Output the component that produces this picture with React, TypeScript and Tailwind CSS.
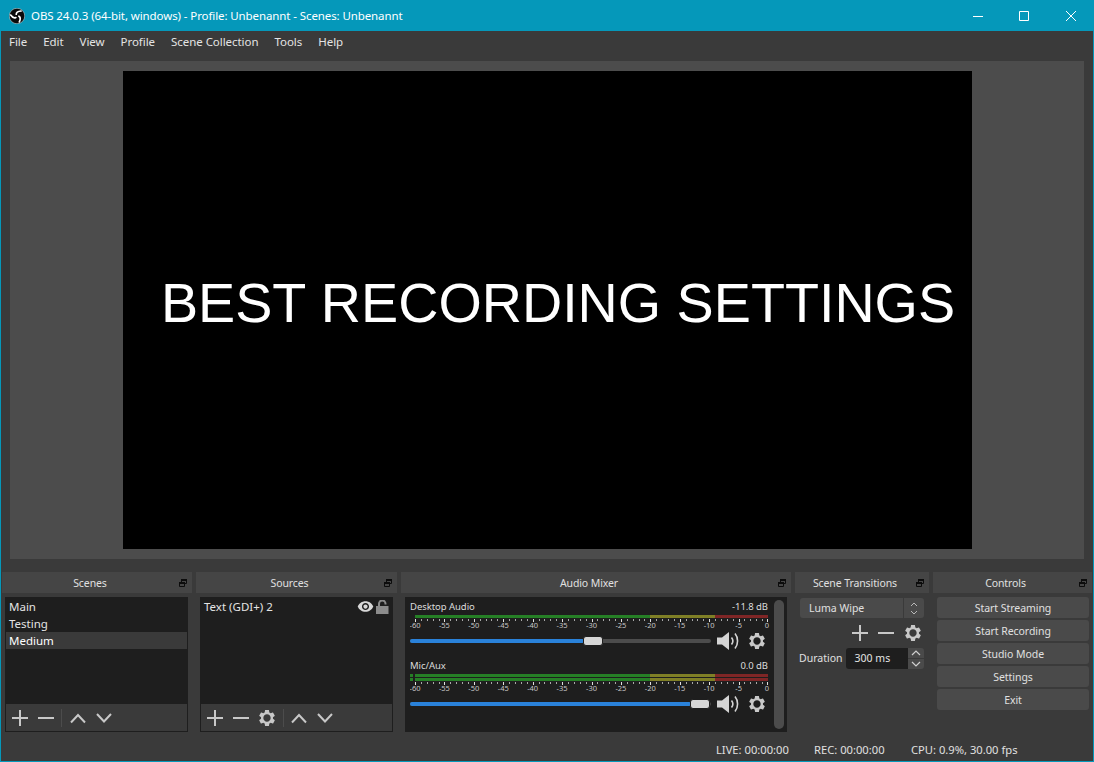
import React from 'react';

const GEAR =
  'M19.14 12.94c.04-.3.06-.61.06-.94 0-.32-.02-.64-.07-.94l2.03-1.58c.18-.14.23-.41.12-.61l-1.92-3.32c-.12-.22-.37-.29-.59-.22l-2.39.96c-.5-.38-1.03-.7-1.62-.94l-.36-2.54c-.04-.24-.24-.41-.48-.41h-3.84c-.24 0-.43.17-.47.41l-.36 2.54c-.59.24-1.13.57-1.62.94l-2.39-.96c-.22-.08-.47 0-.59.22L2.74 8.87c-.12.21-.08.47.12.61l2.03 1.58c-.05.3-.09.63-.09.94s.02.64.07.94l-2.03 1.58c-.18.14-.23.41-.12.61l1.92 3.32c.12.22.37.29.59.22l2.39-.96c.5.38 1.03.7 1.62.94l.36 2.54c.05.24.24.41.48.41h3.84c.24 0 .44-.17.47-.41l.36-2.54c.59-.24 1.13-.56 1.62-.94l2.39.96c.22.08.47 0 .59-.22l1.92-3.32c.12-.22.07-.47-.12-.61l-2.01-1.58zM12 16.4c-2.43 0-4.4-1.97-4.4-4.4s1.97-4.4 4.4-4.4 4.4 1.97 4.4 4.4-1.97 4.4-4.4 4.4z';

const Gear = () => (
  <svg width="20" height="20" viewBox="0 0 24 24" className="shrink-0 -m-px text-[#c8c8c8]">
    <path d={GEAR} fill="currentColor" fillRule="evenodd" />
  </svg>
);

const Plus = () => (
  <svg width="16" height="16" viewBox="0 0 16 16" className="shrink-0 text-[#c8c8c8]">
    <path d="M8 0v16M0 8h16" stroke="currentColor" strokeWidth="2" />
  </svg>
);

const Minus = () => (
  <svg width="16" height="16" viewBox="0 0 16 16" className="shrink-0 text-[#c8c8c8]">
    <path d="M0 8h16" stroke="currentColor" strokeWidth="2" />
  </svg>
);

const Up = () => (
  <svg width="16" height="16" viewBox="0 0 16 16" className="shrink-0 text-[#c8c8c8]">
    <path d="M1 12.5 8 5l7 7.5" fill="none" stroke="currentColor" strokeWidth="2" />
  </svg>
);

const Down = () => (
  <svg width="16" height="16" viewBox="0 0 16 16" className="shrink-0 text-[#c8c8c8]">
    <path d="M1 4 8 11.5 15 4" fill="none" stroke="currentColor" strokeWidth="2" />
  </svg>
);

const Float = () => (
  <svg width="8" height="8" viewBox="0 0 8 8" className="shrink-0">
    <path d="M2.5.5h5v4h-5z" fill="none" stroke="#0c0c0c" />
    <path d="M.5 3.5h5v4h-5z" fill="#454545" stroke="#0c0c0c" />
    <path d="M2 1h6M0 4h6" stroke="#0c0c0c" strokeWidth="2" />
  </svg>
);

const Speaker = () => (
  <svg width="23" height="18" viewBox="0 0 23 18" className="shrink-0 text-[#d4d4d4]">
    <path d="M0 5.5h5L12 0v18l-7-5.5H0z" fill="currentColor" />
    <path d="M14.5 5.5c1.6 2 1.6 5 0 7" fill="none" stroke="currentColor" strokeWidth="1.6" />
    <path d="M18 1.5c3.4 4 3.4 11 0 15" fill="none" stroke="currentColor" strokeWidth="1.6" />
  </svg>
);

const Logo = () => (
  <svg width="16" height="16" viewBox="0 0 32 32" className="shrink-0">
    <circle cx="16" cy="16" r="15.5" fill="#0a0a0a" stroke="#e8e8e8" strokeWidth="1" />
    {[0, 120, 240].map((a) => (
      <path
        key={a}
        transform={`rotate(${a} 16 16)`}
        d="M14.5 12.5C14.5 9 18 6.5 24 6"
        fill="none"
        stroke="#fff"
        strokeWidth="3.4"
        strokeLinecap="round"
      />
    ))}
  </svg>
);

const DB_MAJOR = [-60, -55, -50, -45, -40, -35, -30, -25, -20, -15, -10, -5, 0];

// channel meter, x=0 in the svg is the left edge of the peak squares
const Meter = ({ bars, peak }: { bars: number; peak?: boolean }) => {
  const rowH = 4;
  const barsH = bars * rowH - 1;
  const x0 = 5;
  const step = 353 / 60;
  const ticks = [];
  for (let i = 0; i <= 60; i++) ticks.push(i);
  return (
    <svg width="364" height={barsH + 12} viewBox={`0 0 364 ${barsH + 12}`} className="block shrink-0">
      {Array.from({ length: bars }).map((_, r) => (
        <g key={r}>
          {peak && <rect x="0" y={r * rowH} width="3" height="3" fill="#267f26" />}
          <rect x={x0} y={r * rowH} width={235} height="3" fill="#267f26" />
          <rect x={x0 + 235} y={r * rowH} width={65} height="3" fill="#7f7f26" />
          <rect x={x0 + 300} y={r * rowH} width={53} height="3" fill="#7f2626" />
        </g>
      ))}
      {ticks.map((i) => (
        <rect
          key={i}
          x={Math.round(x0 + i * step) - (i === 60 ? 1 : 0)}
          y={barsH + 1}
          width="1"
          height={i % 5 === 0 ? 3 : 2}
          fill={i % 5 === 0 ? '#e0e0e0' : '#a8a8a8'}
        />
      ))}
      {DB_MAJOR.map((d) => (
        <text
          key={d}
          x={x0 + (d + 60) * step - (d === 0 ? 1 : 0)}
          y={barsH + 10}
          textAnchor="middle"
          fontSize="7.5"
          fill="#c4c4c4"
          fontFamily="Noto Sans, sans-serif"
        >
          {d}
        </text>
      ))}
    </svg>
  );
};

const Channel = ({
  name,
  db,
  bars,
  peak,
  fill,
}: {
  name: string;
  db: string;
  bars: number;
  peak?: boolean;
  fill: number;
}) => (
  <div className="flex flex-col">
    <div className="flex justify-between items-center h-[14px] pt-[1px] w-[358px] text-[9.5px] tracking-[-0.05px] text-[#dcdcdc]">
      <span>{name}</span>
      <span>{db}</span>
    </div>
    <div className="mt-[1px]">
      <Meter bars={bars} peak={peak} />
    </div>
    <div className="flex items-center h-[18px] mt-[2px]">
      <div className="relative w-[301px] h-[4px] rounded-full bg-[#4c4c4c]">
        <div className="h-full rounded-full bg-[#2a82da]" style={{ width: fill }} />
        <div
          className="absolute top-[-3px] h-[10px] rounded-[3px] bg-[#d6d6d6] border border-[#1e1e1e]"
          style={{ left: fill - 1, width: 301 - fill < 20 ? 21 : 20 }}
        />
      </div>
      <div className="ml-[6px]">
        <Speaker />
      </div>
      <div className="ml-[8px]">
        <Gear />
      </div>
    </div>
  </div>
);

const Dock = ({ title, className, children }: { title: string; className: string; children: React.ReactNode }) => (
  <div className={`flex flex-col shrink-0 ${className}`}>
    <div className="relative flex items-center justify-center h-[21px] pt-[3px] pr-[14px] bg-[#454545] text-[10.5px] tracking-[-0.1px] text-[#e0e0e0]">
      {title}
      <div className="absolute right-[5px] top-[7px]">
        <Float />
      </div>
    </div>
    <div className="flex-1 min-h-0 pt-[4px]">{children}</div>
  </div>
);

const ListBox = ({ children, tools }: { children: React.ReactNode; tools: React.ReactNode }) => (
  <div className="flex flex-col h-[135px] mx-[4px] bg-[#1e1e1e] border border-[#1e1e1e]">
    <div className="flex-1 min-h-0 text-[11.5px] text-[#e4e4e4]">{children}</div>
    <div className="flex items-center h-[27px] bg-[#3a3a3a] px-[6px]">{tools}</div>
  </div>
);

const Sep = () => <div className="w-px h-[18px] bg-[#4c4c4c]" />;

const CtrlButton = ({ label }: { label: string }) => (
  <button className="h-[21px] rounded-[3px] bg-[#4a4a4a] text-[10.5px] tracking-[-0.05px] text-[#e0e0e0] leading-none pt-[1px]">{label}</button>
);

export default function App() {
  return (
    <div className="w-[1094px] h-[762px] flex flex-col overflow-hidden bg-[#3a3a3a] text-[#e0e0e0] border-x border-b border-[#0598ba] font-['Noto_Sans',sans-serif]">
      {/* title bar */}
      <div className="flex items-center h-[31px] shrink-0 bg-[#0598ba] -mx-px pl-[9px] text-[11.5px] tracking-[-0.1px] text-white">
        <Logo />
        <span className="ml-[6px]">OBS 24.0.3 (64-bit, windows) - Profile: Unbenannt - Scenes: Unbenannt</span>
        <div className="ml-auto flex items-center">
          <div className="w-[46px] flex justify-center">
            <svg width="10" height="10" viewBox="0 0 10 10"><path d="M0 5.5h10" stroke="#fff" /></svg>
          </div>
          <div className="w-[46px] mr-[1px] flex justify-center">
            <svg width="10" height="10" viewBox="0 0 10 10"><path d="M.5.5h9v9h-9z" fill="none" stroke="#fff" /></svg>
          </div>
          <div className="w-[46px] flex justify-center">
            <svg width="10" height="10" viewBox="0 0 10 10"><path d="M0 0l10 10M10 0 0 10" stroke="#fff" /></svg>
          </div>
        </div>
      </div>

      {/* menu */}
      <div className="flex items-center h-[23px] shrink-0 pl-[8px] pb-[1px] gap-[16px] text-[11.5px] tracking-[-0.05px] text-[#e4e4e4]">
        {['File', 'Edit', 'View', 'Profile', 'Scene Collection', 'Tools', 'Help'].map((m) => (
          <span key={m}>{m}</span>
        ))}
      </div>

      {/* preview */}
      <div className="flex justify-center items-center h-[498px] shrink-0 mx-[9px] mt-[7px] bg-[#4c4c4c]">
        <div className="flex items-center justify-center w-[849px] h-[478px] bg-black pl-[22px] pb-[12px] whitespace-nowrap text-[55.7px] text-white font-['Liberation_Sans',sans-serif]">
          BEST RECORDING SETTINGS
        </div>
      </div>

      {/* docks */}
      <div className="flex h-[160px] shrink-0 mt-[13px] ml-[1px] gap-[4px]">
        <Dock title="Scenes" className="w-[190px]">
          <div className="ml-[-1px]">
            <ListBox
              tools={
                <div className="flex items-center">
                  <Plus />
                  <div className="ml-[10px]"><Minus /></div>
                  <div className="ml-[7px]"><Sep /></div>
                  <div className="ml-[8px]"><Up /></div>
                  <div className="ml-[10px]"><Down /></div>
                </div>
              }
            >
              <div className="pl-[3px] h-[17px] flex items-center">Main</div>
              <div className="pl-[3px] h-[17px] flex items-center">Testing</div>
              <div className="pl-[3px] h-[17px] flex items-center bg-[#3a3a3a] text-white">Medium</div>
            </ListBox>
          </div>
        </Dock>

        <Dock title="Sources" className="w-[201px]">
          <ListBox
            tools={
              <div className="flex items-center">
                <Plus />
                <div className="ml-[10px]"><Minus /></div>
                <div className="ml-[9px]"><Gear /></div>
                <div className="ml-[7px]"><Sep /></div>
                <div className="ml-[7px]"><Up /></div>
                <div className="ml-[10px]"><Down /></div>
              </div>
            }
          >
            <div className="flex items-center h-[17px] pl-[3px] pr-[3px]">
              <span>Text (GDI+) 2</span>
              <svg width="17" height="17" viewBox="0 0 24 24" className="ml-auto text-[#d8d8d8]">
                <path
                  fill="currentColor"
                  d="M12 4.5C7 4.5 2.73 7.61 1 12c1.73 4.39 6 7.5 11 7.5s9.27-3.11 11-7.5c-1.73-4.39-6-7.5-11-7.5zM12 17c-2.76 0-5-2.24-5-5s2.24-5 5-5 5 2.24 5 5-2.24 5-5 5zm0-8c-1.66 0-3 1.34-3 3s1.34 3 3 3 3-1.34 3-3-1.34-3-3-3z"
                />
              </svg>
              <svg width="13" height="14" viewBox="0 0 13 14" className="ml-[2px] text-[#8c8c8c]">
                <path d="M0 6h12.5v8H0z" fill="currentColor" />
                <path d="M3 6V3.7a3.2 3.2 0 0 1 6.5 0V4.5" fill="none" stroke="currentColor" strokeWidth="2" />
              </svg>
            </div>
          </ListBox>
        </Dock>

        <Dock title="Audio Mixer" className="w-[390px]">
          <div className="flex h-[135px] mx-[4px] bg-[#1e1e1e] pl-[5px] pt-[3px]">
            <div className="flex flex-col gap-[9px] w-[364px]">
              <Channel name="Desktop Audio" db="-11.8 dB" bars={1} fill={174} />
              <Channel name="Mic/Aux" db="0.0 dB" bars={2} peak fill={281} />
            </div>
            <div className="w-[10px] h-[129px] rounded-full bg-[#4c4c4c]" />
          </div>
        </Dock>

        <Dock title="Scene Transitions" className="w-[134px]">
          <div className="flex flex-col px-[5px] pt-[1px]">
            <div className="flex items-stretch h-[20px] rounded-[3px] bg-[#4a4a4a] text-[10.5px] text-[#e0e0e0]">
              <div className="flex-1 flex items-center pl-[9px] pt-[2px]">Luma Wipe</div>
              <div className="w-[21px] border-l border-[#3a3a3a] flex items-center justify-center">
                <svg width="8" height="15" viewBox="0 0 8 15">
                  <path d="M1 5l3-3 3 3M1 10l3 3 3-3" fill="none" stroke="#b8b8b8" />
                </svg>
              </div>
            </div>
            <div className="flex items-center justify-end h-[20px] mt-[5px] gap-[10px] pr-[2px]">
              <Plus />
              <Minus />
              <Gear />
            </div>
            <div className="flex items-center h-[21px] mt-[5px] text-[10.5px]">
              <span className="w-[46px] -ml-px mr-px pt-[1px] text-[#e0e0e0]">Duration</span>
              <div className="flex items-center w-[63px] h-full rounded-l-[3px] bg-[#1e1e1e] pl-[9px] pt-[1px] text-[#e4e4e4]">300 ms</div>
              <div className="flex flex-col w-[16px] h-full gap-[1px]">
                <div className="flex-1 rounded-tr-[3px] bg-[#4a4a4a] flex items-center justify-center">
                  <svg width="10" height="6" viewBox="0 0 10 6"><path d="M1 5l4-4 4 4" fill="none" stroke="#d0d0d0" strokeWidth="1.2" /></svg>
                </div>
                <div className="flex-1 rounded-br-[3px] bg-[#4a4a4a] flex items-center justify-center">
                  <svg width="10" height="6" viewBox="0 0 10 6"><path d="M1 1l4 4 4-4" fill="none" stroke="#d0d0d0" strokeWidth="1.2" /></svg>
                </div>
              </div>
            </div>
          </div>
        </Dock>

        <Dock title="Controls" className="w-[159px]">
          <div className="flex flex-col gap-[2px] pl-[4px] pr-[3px]">
            {['Start Streaming', 'Start Recording', 'Studio Mode', 'Settings', 'Exit'].map((b) => (
              <CtrlButton key={b} label={b} />
            ))}
          </div>
        </Dock>
      </div>

      {/* status bar */}
      <div className="relative flex flex-1 items-center pl-[715px] pt-[8px] text-[11.2px] text-[#e0e0e0]">
        <span className="w-[98px]">LIVE: 00:00:00</span>
        <span className="w-[97px]">REC: 00:00:00</span>
        <span>CPU: 0.9%, 30.00 fps</span>
      </div>
    </div>
  );
}
